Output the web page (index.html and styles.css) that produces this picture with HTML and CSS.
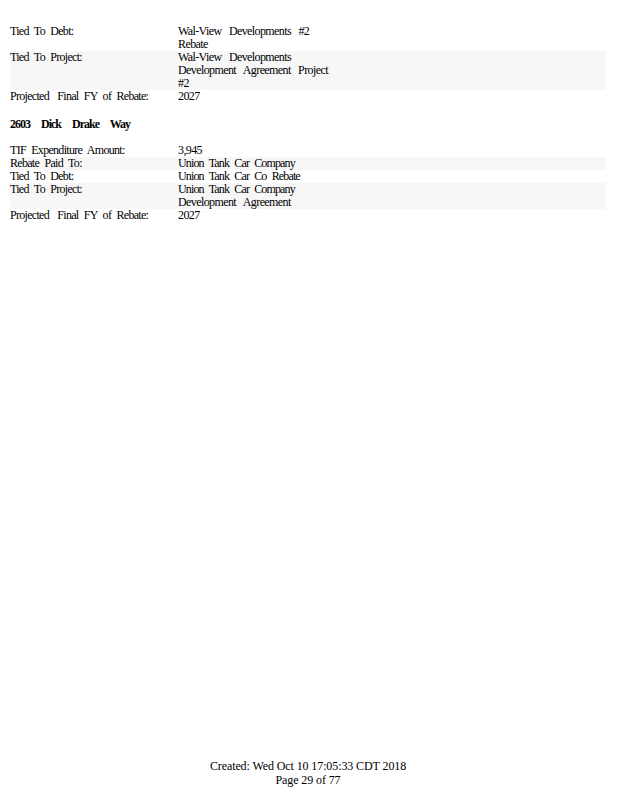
FILE: index.html
```html
<!DOCTYPE html>
<html lang="en">

<head>
    <meta charset="UTF-8">
    <meta name="viewport" content="width=device-width, initial-scale=1.0">
    <title>TIF Report - Page 29</title>
    <link rel="stylesheet" href="styles.css">
</head>

<body>

    <div class="page">
        <div class="report">
            <!-- continued from previous page -->
            <div class="row">
                <div class="label">Tied To Debt:</div>
                <div class="value wide">Wal-View Developments #2 Rebate</div>
            </div>
            <div class="row shade">
                <div class="label">Tied To Project:</div>
                <div class="value wide">Wal-View Developments Development Agreement Project #2</div>
            </div>
            <div class="row">
                <div class="label">Projected <span class="gap">Final</span> FY of Rebate:</div>
                <div class="value">2027</div>
            </div>

            <h3 class="site">2603 Dick Drake Way</h3>

            <div class="row">
                <div class="label">TIF Expenditure Amount:</div>
                <div class="value">3,945</div>
            </div>
            <div class="row shade">
                <div class="label">Rebate Paid To:</div>
                <div class="value tight">Union Tank Car Company</div>
            </div>
            <div class="row">
                <div class="label">Tied To Debt:</div>
                <div class="value tight">Union Tank Car Co Rebate</div>
            </div>
            <div class="row shade">
                <div class="label">Tied To Project:</div>
                <div class="value"><span class="tight">Union Tank Car Company</span> <span class="wide">Development Agreement</span></div>
            </div>
            <div class="row">
                <div class="label">Projected <span class="gap">Final</span> FY of Rebate:</div>
                <div class="value">2027</div>
            </div>
        </div>

        <div class="footer">
            Created: Wed Oct 10 17:05:33 CDT 2018<br>
            Page 29 of 77
        </div>
    </div>

</body>

</html>
```

FILE: styles.css
```css
body {
    margin: 0;
    padding: 0;
    background-color: #ffffff;
    color: #000000;
    font-family: 'Liberation Serif', 'Times New Roman', serif;
}

.page {
    width: 618px;
    height: 800px;
    display: flex;
    flex-direction: column;
    box-sizing: border-box;
    padding: 25px 12px 13px 10px;
}

.report {
    font-size: 12px;
    line-height: 13px;
    letter-spacing: -0.6px;
    word-spacing: 3px;
}

.row {
    display: flex;
}

.shade {
    background-color: #f7f7f7;
}

.label {
    width: 168px;
    flex-shrink: 0;
    letter-spacing: -0.7px;
}

.gap {
    margin-left: 3px;
}

.value {
    width: 160px;
}

.wide {
    word-spacing: 5px;
}

.tight {
    letter-spacing: -0.85px;
}

.site {
    margin: 15px 0 13px 0;
    font-size: 12px;
    line-height: 13px;
    font-weight: bold;
    letter-spacing: -1px;
    word-spacing: 9px;
}

.footer {
    margin-top: auto;
    text-align: center;
    font-size: 12px;
    line-height: 14px;
    letter-spacing: -0.1px;
}
```
